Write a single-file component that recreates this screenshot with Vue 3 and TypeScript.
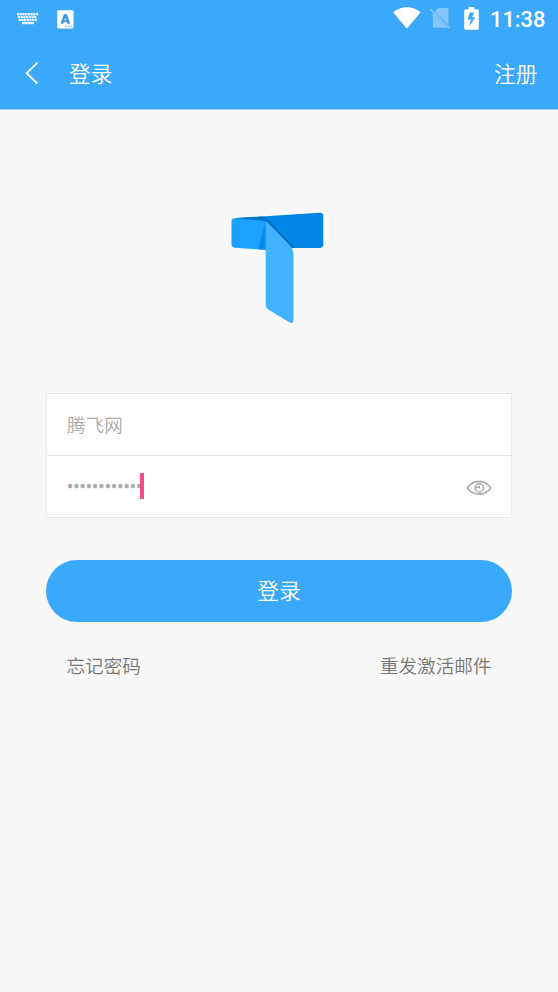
<script setup lang="ts">
import { ref, computed } from 'vue'

const account = ref('腾飞网')
const passwordLength = ref(12)
const maskedPassword = computed(() => '•'.repeat(passwordLength.value))
const keyRows = [
  { y: 0, x: 0, count: 8 },
  { y: 2.9, x: 0.9, count: 7 },
  { y: 5.8, x: 1.6, count: 7 },
]
</script>

<template>
  <div class="screen">
    <header class="top">
      <div class="status">
        <div class="status-group">
          <svg class="keyboard" viewBox="0 0 22 12" width="22" height="12">
            <g v-for="row in keyRows" :key="row.y">
              <rect v-for="n in row.count" :key="n" :x="row.x + (n - 1) * 2.7" :y="row.y" width="2.2" height="2.3" />
            </g>
            <rect x="5" y="9" width="12" height="2.2" />
          </svg>
          <svg class="lang" viewBox="0 0 17 19" width="17" height="19">
            <rect x="0.2" y="0.2" width="16.4" height="18.2" rx="1.3" fill="#fff" />
            <path d="M3.8 13.6 7.1 4.3h2.6l3.2 9.3h-2.5l-.5-1.6H6.8l-.5 1.6zM7.3 10.2h2.1L8.4 6.8z" fill="#3c96dc" stroke="#3c96dc" stroke-width="0.4" />
            <path d="M8 16.2h2M11 16.2h1.8M13.7 16.2h1.6" stroke="#5aa9e6" stroke-width="1.1" />
          </svg>
        </div>
        <div class="status-group right">
          <svg viewBox="0 0 28 22" width="28" height="22">
            <path d="M0.2 5.2C8.3-1.3 19.3-1.3 27.6 5.2L13.9 21.8z" fill="#fff" />
          </svg>
          <svg class="sim" viewBox="0 0 21 22" width="21" height="22">
            <path d="M8.2 1h9q1.3 0 1.3 1.3v15.6L4.7 4.4zM2.8 5.6 17.8 20.7H4.3q-1.5 0-1.5-1.5z" fill="#83c8fd" />
            <path d="M.5 2.3 19.6 21.2" stroke="#83c8fd" stroke-width="1.6" />
          </svg>
          <svg class="battery" viewBox="0 0 15 23" width="15" height="23">
            <path fill-rule="evenodd" d="M4.7 0h5.6v2.2h3q1.5 0 1.5 1.5v17.5q0 1.5-1.5 1.5H1.7q-1.5 0-1.5-1.5V3.7q0-1.5 1.5-1.5h3zM5.6 5.4 3.7 12.6h3.1L5.4 19.2l6-9H8.1L10.2 5.4z" fill="#fff" />
          </svg>
          <span class="time">11:38</span>
        </div>
      </div>
      <nav class="bar">
        <svg class="back" viewBox="0 0 14 24" width="14" height="24">
          <path d="M12.4 1.6 1.7 12.2l10.7 10.4" fill="none" stroke="#fff" stroke-width="1.9" />
        </svg>
        <span class="title">登录</span>
        <span class="register">注册</span>
      </nav>
    </header>

    <main class="content">
      <svg class="logo" viewBox="0 0 94 112" width="94" height="112">
        <path d="M4 6.1 88.5.7Q92.3.5 92.3 4v28.3q0 3.6-3.6 3.6H62L30 22z" fill="#0087e4" />
        <path d="M3 6.3 32 4.5 39 9.2 64.5 35.9H60L34 12z" fill="#0073c8" />
        <path d="M4 6.2 31.5 8.7Q35 9 35 12v26L4 35.7Q.5 35.5.5 32V9.5Q.5 6 4 6.2z" fill="#1ba1ff" />
        <path d="M34.2 10.8 27 37.2 35.5 37.8V11z" fill="#078eeb" />
        <path d="M35.2 9.3 59 33.5Q62.5 37.3 62.5 41V107.5Q62.5 112.5 58.3 110.3L38 98Q34.7 96 34.7 92.5V12Q34.2 10 35.2 9.3z" fill="#40b2ff" />
      </svg>

      <section class="form">
        <div class="field">{{ account }}</div>
        <div class="field password">
          <span class="dots">{{ maskedPassword }}</span>
          <span class="caret"></span>
          <svg class="eye" viewBox="0 0 26 16" width="26" height="16" fill="none" stroke="#aaa">
            <path d="M1.3 8C7-.9 19-.9 24.7 8 19 16.2 7 16.2 1.3 8z" stroke-width="1.6" />
            <circle cx="13.3" cy="7.9" r="4.1" stroke-width="1.5" />
            <path d="M10 7.6h3.2V5.4" stroke-width="1.5" />
          </svg>
        </div>
      </section>

      <button class="submit" type="button">登录</button>
      <div class="links">
        <span>忘记密码</span>
        <span>重发激活邮件</span>
      </div>
    </main>
  </div>
</template>

<style>
body {
  background: #f8f8f8;
}
</style>

<style scoped>
.screen {
  height: 992px;
  overflow: hidden;
  background: #f8f8f8;
  font-family: Roboto, "Noto Sans CJK SC", sans-serif;
  font-weight: 350;
}
.screen svg {
  display: block;
  flex: none;
}
.top {
  box-sizing: border-box;
  height: 110px;
  border-bottom: 1px solid #a4d5fb;
  background: #3ba9fb;
  color: #fff;
}
.status {
  height: 38px;
  display: flex;
  justify-content: space-between;
  padding: 0 13px 0 17px;
}
.status-group {
  display: flex;
  align-items: center;
}
.right {
  height: 36px;
}
.keyboard {
  fill: #e9f6ff;
}
.lang {
  margin-left: 18px;
}
.sim {
  margin-left: 9px;
}
.battery {
  margin-left: 13px;
}
.time {
  margin-left: 11px;
  width: 55px;
  font-size: 21.8px;
  line-height: 36px;
  font-weight: 500;
  padding-top: 3px;
  white-space: nowrap;
}
.bar {
  height: 71px;
  display: flex;
  align-items: center;
  padding: 0 20.5px 0 25px;
  font-size: 21.7px;
  line-height: 32px;
}
.back {
  margin-top: -1px;
}
.title,
.register {
  padding-top: 2px;
}
.title {
  margin-left: 30px;
}
.register {
  margin-left: auto;
}
.content {
  display: flex;
  flex-direction: column;
  padding: 102px 46px 0;
}
.logo {
  margin-left: 185px;
}
.form {
  margin-top: 69px;
  border: 1px solid #e5e5e5;
  border-left-color: #ededed;
  border-right-color: #ededed;
  background: #fff;
}
.field {
  box-sizing: border-box;
  height: 61px;
  display: flex;
  align-items: center;
  padding: 0 20px 3px;
  color: #aaa;
  font-size: 18.6px;
}
.password {
  height: 62px;
  padding-bottom: 0;
  border-top: 1px solid #e5e5e5;
}
.dots {
  color: #aaa;
  font-weight: 400;
  -webkit-text-stroke: 0.4px #aaa;
}
.caret {
  width: 4px;
  height: 26px;
  background: #f24c86;
  margin: -2px 0 0 -2px;
}
.eye {
  margin: 3px -1px 0 auto;
}
.submit {
  margin-top: 42px;
  height: 61.5px;
  border: 0;
  padding: 0 0 2px;
  border-radius: 31px;
  background: #3ba9fb;
  color: #fff;
  font: inherit;
  font-size: 21.7px;
}
.links {
  display: flex;
  justify-content: space-between;
  margin-top: 31.5px;
  padding: 0 20.5px;
  color: #777;
  font-size: 18.6px;
  line-height: 28px;
}
</style>
